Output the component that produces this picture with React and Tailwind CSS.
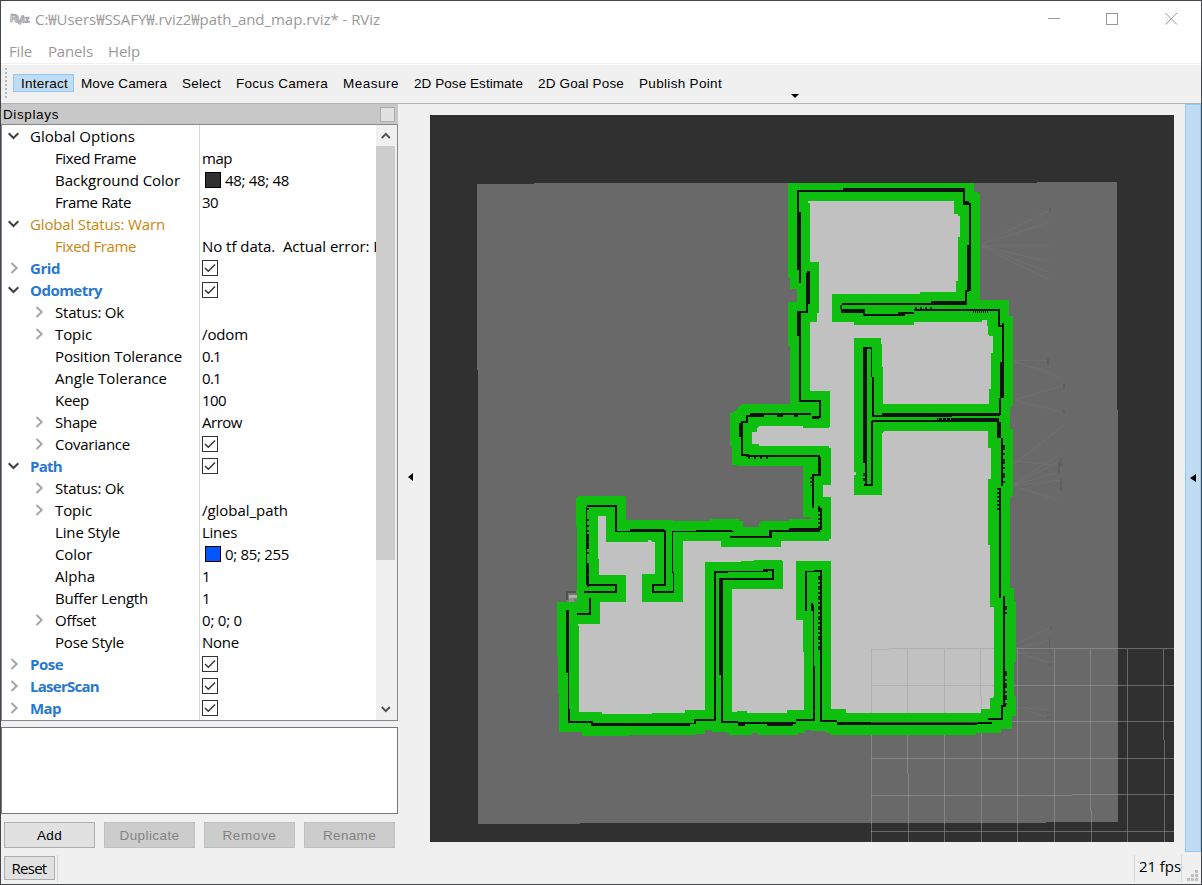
import React, { useLayoutEffect, useRef } from "react";

const UI = "font-['Open_Sans','Noto_Sans_CJK_KR',sans-serif]";
const BITMAP = "font-['Liberation_Sans',sans-serif]";

// A one-line label whose letter spacing is adjusted to fill the width w.
function Fit({ w, className = "", children }) {
  const ref = useRef(null);
  useLayoutEffect(() => {
    const el = ref.current;
    el.style.letterSpacing = "0px";
    const natural = el.getBoundingClientRect().width;
    el.style.letterSpacing = (w - natural) / String(children).length + "px";
  }, [w, children]);
  return (
    <span ref={ref} className={"inline-block shrink-0 whitespace-pre " + className}>
      {children}
    </span>
  );
}

const rows = [
  { l: "Global Options", w: 105, d: 0, a: "open" },
  { l: "Fixed Frame", w: 81, d: 1, v: "map", vw: 30 },
  { l: "Background Color", w: 125, d: 1, v: "48; 48; 48", vw: 64, sw: "bg-[#303030]" },
  { l: "Frame Rate", w: 76, d: 1, v: "30", vw: 16 },
  { l: "Global Status: Warn", w: 135, d: 0, a: "open", c: "text-[#c8860d]" },
  { l: "Fixed Frame", w: 81, d: 1, c: "text-[#c8860d]", v: "No tf data.  Actual error: F", vw: 179 },
  { l: "Grid", w: 30, d: 0, a: "shut", b: true, check: true },
  { l: "Odometry", w: 72, d: 0, a: "open", b: true, check: true },
  { l: "Status: Ok", w: 69, d: 1, a: "shut" },
  { l: "Topic", w: 37, d: 1, a: "shut", v: "/odom", vw: 46 },
  { l: "Position Tolerance", w: 127, d: 1, v: "0.1", vw: 19 },
  { l: "Angle Tolerance", w: 112, d: 1, v: "0.1", vw: 19 },
  { l: "Keep", w: 34, d: 1, v: "100", vw: 24 },
  { l: "Shape", w: 42, d: 1, a: "shut", v: "Arrow", vw: 40 },
  { l: "Covariance", w: 75, d: 1, a: "shut", check: true },
  { l: "Path", w: 32, d: 0, a: "open", b: true, check: true },
  { l: "Status: Ok", w: 69, d: 1, a: "shut" },
  { l: "Topic", w: 37, d: 1, a: "shut", v: "/global_path", vw: 86 },
  { l: "Line Style", w: 65, d: 1, v: "Lines", vw: 35 },
  { l: "Color", w: 37, d: 1, v: "0; 85; 255", vw: 64, sw: "bg-[#0055ff]" },
  { l: "Alpha", w: 40, d: 1, v: "1", vw: 8 },
  { l: "Buffer Length", w: 93, d: 1, v: "1", vw: 8 },
  { l: "Offset", w: 41, d: 1, a: "shut", v: "0; 0; 0", vw: 40 },
  { l: "Pose Style", w: 69, d: 1, v: "None", vw: 37 },
  { l: "Pose", w: 33, d: 0, a: "shut", b: true, check: true },
  { l: "LaserScan", w: 69, d: 0, a: "shut", b: true, check: true },
  { l: "Map", w: 31, d: 0, a: "shut", b: true, check: true },
];

function Arrow({ kind }) {
  if (kind === "open")
    return (
      <svg width="12" height="8" viewBox="0 0 12 8">
        <path d="M0.7 1.2 L5.5 6 L10.3 1.2" fill="none" stroke="#404040" strokeWidth="2" />
      </svg>
    );
  if (kind === "shut")
    return (
      <svg width="12" height="12" viewBox="0 0 12 12">
        <path d="M3.5 1 L8.7 6 L3.5 11" fill="none" stroke="#a3a3a3" strokeWidth="1.9" />
      </svg>
    );
  return null;
}

function Check() {
  return (
    <svg width="16" height="16" viewBox="0 0 16 16" className="shrink-0">
      <rect x="0.5" y="0.5" width="15" height="15" fill="#fff" stroke="#333" />
      <path d="M3 8 L6.3 11.2 L13 4.5" fill="none" stroke="#333" strokeWidth="1.4" />
    </svg>
  );
}

function Row({ r }) {
  const color = r.b ? "text-[#2878cd] font-bold" : r.c || "text-black";
  return (
    <div className="flex h-[22px] shrink-0 text-[15px] leading-[22px]">
      <div className="flex w-[197px] shrink-0 items-center">
        <div className={r.d ? "flex w-[53px] justify-end pr-[10px]" : "flex w-[28px] pl-[6px]"}>
          <Arrow kind={r.a} />
        </div>
        <Fit w={r.w} className={color}>{r.l}</Fit>
      </div>
      <div className="flex w-[177px] items-center overflow-hidden border-l border-[#d8d8d8] pl-[2px]">
        {r.sw && <div className={"mr-1 ml-[3px] size-4 shrink-0 border border-black " + r.sw} />}
        {r.check && <Check />}
        {r.v && <Fit w={r.vw}>{r.v}</Fit>}
      </div>
    </div>
  );
}

const OUTER =
  "M788 183H974V192H978L980 195V300H1009V316H1013V406H1011V409H1010V429H1013V493L1012 497H1010V588H1014V601H1016V662H1014V696H1016V716H1012V729H1001V733H976V735H831V733H826V731H811V730H805V733H798V735H758V733H752V735H729V733H727V732H712V730H705V734H696V735H629V736H582V732H559V694H558V657H557V602H577V527H576V498L578 496H624L626 498V520H673V521H710V519H739V521H743V527H759V523L761 521H789V519H811V517H803V466H737V465H732V446H730V413H732L737 410V408L743 404H790V346H788V302H797V289H790V278H788Z";
const FREE =
  "M808 201H954V214H958V216H960V237H958V281H956V292H920V294H832V322H854V325H914V322H982V320H987V326H988V334L989 336H993V353H991V389H989V404H883V367H882V344H881V338H854V472H856V475H854V495H882V433L884 431H988V448H990L991 449V479H988V545H990V607H994V696L992 698H990V709H981V713H846V709H831V561H796V620H803V652H804V710H787V713H747V711H737V712H732V589H783V561L781 560H754V561H741V562H705V710H685V713H652V714H602V712H579V626H578V624H600V602H626V575H599V559H598V516H606V542H648V540H651L652 542H655V574H642V602H683V541H721V547H781V541H829V539H831V497H823V485H831V448H829V446H759V444H752V432H757V428L759 426H803V428H829L830 426V391H810V322H817V313H819V262H810V203H808Z";

const walls = [
  [797,190,46,2],[843,188,122,4],[963,188,2,17],[963,201,6,4],[969,203,2,42],[967,245,4,46],[965,290,4,2],[965,291,2,14],[931,301,36,4],[842,303,90,2],
  [841,309,24,4],[863,311,2,4],[863,314,42,2],[898,312,16,2],[914,309,84,2],[998,309,2,17],[998,325,5,2],[1002,323,2,39],[1000,362,4,36],[999,398,2,17],
  [797,190,2,22],[797,212,4,58],[799,270,2,13],[806,273,4,31],[807,271,3,3],[806,304,2,8],[798,311,10,2],[797,311,4,25],[799,336,2,65],[799,400,22,2],
  [819,400,2,18],[812,416,7,3],[750,413,61,2],[748,415,16,2],[777,415,6,2],[794,415,4,2],[746,415,2,7],[741,421,7,2],[739,423,4,14],[741,437,2,18],
  [741,454,8,2],[746,455,74,2],[818,457,3,18],[812,474,9,2],[812,474,2,34],[818,506,2,4],[820,508,2,22],[769,530,51,2],[789,528,31,2],[769,530,3,8],
  [730,536,42,2],[672,531,62,1],[696,530,36,2],[672,531,1,42],[673,572,1,20],[652,591,22,2],[652,584,2,8],[652,584,14,2],[664,530,2,55],[615,531,51,1],[630,529,34,2],
  [615,505,2,26],[587,505,30,2],[586,507,1,78],[587,525,2,2],[587,534,2,15],[587,564,2,20],[587,584,30,2],[615,584,2,8],[584,591,33,2],[589,598,2,17],[577,613,14,2],
  [566,610,3,63],[568,673,1,36],[568,709,2,13],[568,721,25,2],[591,723,99,3],[591,723,105,1],[694,719,2,5],[694,719,22,2],[714,571,2,150],[714,571,14,2],
  [728,571,40,1],[763,569,9,2],[772,569,2,11],[719,578,55,2],[719,578,4,97],[721,675,2,46],[721,721,17,2],[738,722,58,2],[738,724,7,2],[767,724,26,2],
  [796,719,19,2],[813,605,1,61],[813,666,2,54],[820,570,2,151],[814,570,8,2],[805,571,2,40],[805,571,10,1],[811,603,2,8],[820,720,17,2],[837,722,140,3],
  [977,722,15,2],[988,718,15,2],[1001,706,2,14],[1001,705,5,2],[1003,596,2,110],[999,488,2,110],[997,422,4,16],[1001,438,2,48],
  [882,413,118,2],[872,415,128,1],[872,415,80,2],[872,420,127,2],[937,418,62,2],[871,421,2,65],[864,484,9,2],[863,347,4,116],[865,463,2,22],[863,347,9,2],[871,347,1,30],[872,377,2,39],
];

// Scattered obstacle cells: [x1, y1, x2, y2, dash pattern]
const cells = [
  [819,576,819,650,"4 2 2 2"],[813,477,813,486,"2 2"],[811,477,811,486,"2 2"],[819,510,819,528,"2 2"],
  [1004,445,1004,486,"5 3 2 4"],[998,488,998,510,"2 2"],[1006,671,1006,706,"5 3 2 2"],[1006,606,1006,614,"4 2"],
  [748,458,768,458,"2 4"],[915,308,932,308,"2 3"],[973,312,988,312,"1 1"],[588,508,588,590,"2 9"],[864,473,864,482,"3 2"],
];

// Dashes carved back out of the solid strokes in the inflation colour.
const gaps = [[938,419,952,419,"1 3"]];

const rays = [
  "M982 244L1050 210M982 244L1050 222M982 245H1050M982 246L1050 262M982 247L1050 280M982 246L1048 272",
  "M1014 361L1046 360M1014 361L1060 378M1014 362L1052 372M1014 400L1062 386M1014 400L1062 412M1014 464L1064 425M1014 461L1060 466",
  "M1014 485L1058 462M1014 485L1060 472M1014 486L1060 480M1014 486L1058 500M1014 484L1058 455",
  "M1016 644L1050 628M1016 648L1050 640M1016 652L1050 654M1016 652L1050 663M1016 707L1048 710M1016 707L1046 717",
];
const specks = [[1049,208,2,4],[1047,358,2,8],[1063,384,2,5],[1063,410,2,3],[1058,462,2,12],[1060,458,2,8],[1060,478,2,12],[1050,626,2,4],[1049,638,1,14],[1049,663,2,2],[1047,711,2,2],[1047,717,2,2]];

function MapView() {
  return (
    <svg width="744" height="727" viewBox="430 115 744 727" shapeRendering="crispEdges" className="block">
      <rect x="430" y="115" width="744" height="727" fill="#303030" />
      <path d="M477 184H534V183H1037V182H1117V410H1118V822H1046V823H580V824H478V370H477Z" fill="#696969" />
      <g stroke="#6e6e6e" strokeWidth="1" fill="none">
        {rays.map((d) => <path key={d} d={d} />)}
      </g>
      {specks.map(([x, y, w, h]) => <rect key={x + "-" + y} x={x} y={y} width={w} height={h} fill="#606060" />)}
      <path d={FREE} fill="#c1c1c1" />
      <g stroke="#a0a0a4" strokeOpacity="0.5" strokeWidth="1" fill="none">
        <path d="M871.5 649V842M907.5 649V773M908.5 773V842M944.5 649V842M980.5 649V697M981.5 697V842M1017.5 649V842M1054.5 649V842M1090.5 649V811M1091.5 811V842M1127.5 649V842M1163.5 649V740M1164.5 740V842" />
        <path d="M871 649.5H889M889 648.5H1174M871 685.5H1174M871 721.5H1174M871 758.5H1174M871 795.5H1072M1072 794.5H1174M871 831.5H1174" />
      </g>
      <path d={OUTER + FREE} fillRule="evenodd" fill="#0fbf0f" />
      <g fill="#101210">
        {walls.map(([x, y, w, h], i) => <rect key={i} x={x} y={y} width={w} height={h} />)}
      </g>
      <path d="M871 722.5H978" stroke="#3c463c" />
      <g stroke="#232823" strokeWidth="2">
        {cells.map(([a, b, c, d, p], i) => <path key={i} d={`M${a} ${b}L${c} ${d}`} strokeDasharray={p} />)}
      </g>
      <g stroke="#0d8f0d" strokeWidth="2">
        {gaps.map(([a, b, c, d, p], i) => <path key={i} d={`M${a} ${b}L${c} ${d}`} strokeDasharray={p} />)}
      </g>
      <rect x="566" y="591" width="11" height="11" fill="#777" />
      <path d="M566 591H576V593H568V600H566Z" fill="#505050" />
      <path d="M569 595H577V598H569Z" fill="#b0b0b0" />
      <path d="M569 598H574V602H569Z" fill="#8f8f8f" />
      <rect x="840" y="305" width="2" height="4" fill="#263026" />
    </svg>
  );
}

const tools = [
  ["Move Camera", 86], ["Select", 39], ["Focus Camera", 92], ["Measure", 56],
  ["2D Pose Estimate", 109], ["2D Goal Pose", 86], ["Publish Point", 83],
];

export default function App() {
  return (
    <div className={"flex h-[885px] w-[1202px] flex-col overflow-hidden border border-[#45474c] bg-[#f0f0f0] text-black " + UI}>
      <header className="flex h-[36px] shrink-0 items-center bg-white pl-[9px]">
        <svg width="20" height="16" viewBox="0 0 20 16" className="shrink-0">
          <g fontFamily="Liberation Sans" fontWeight="bold" fill="#f4f4f4" stroke="#a2a2a2" strokeWidth="0.9">
            <text x="0" y="11" fontSize="11" transform="rotate(4 3 8)">R</text>
            <text x="6" y="12.5" fontSize="11">V</text>
            <text x="12" y="11.5" fontSize="9.5" transform="rotate(-4 15 8)">iz</text>
          </g>
        </svg>
        <Fit w={345} className="ml-[5px] text-[15px] leading-5 text-[#999]">C:₩Users₩SSAFY₩.rviz2₩path_and_map.rviz* - RViz</Fit>
        <svg width="130" height="14" viewBox="0 0 130 14" className="mr-[23px] ml-auto">
          <g fill="none" stroke="#999" strokeWidth="1">
            <path d="M0 6.5H12M58.5 1.5H69.5V12.5H58.5Z" shapeRendering="crispEdges" />
            <path d="M117.5 1L129 12.5M129 1L117.5 12.5" />
          </g>
        </svg>
      </header>
      <nav className="flex h-[26px] shrink-0 items-center bg-white pt-px pl-2 text-[15px] leading-5 text-[#999]">
        <Fit w={23}>File</Fit>
        <Fit w={45} className="ml-4">Panels</Fit>
        <Fit w={32} className="ml-[15px]">Help</Fit>
      </nav>
      <div className="h-[2px] shrink-0 border-b border-white bg-[#f0f0f0]" />
      <div className={"flex h-[39px] shrink-0 border-b border-[#b4b4b4] text-[13.5px] " + BITMAP}>
        <div className="mt-[3px] ml-1 h-8 w-[2px] bg-[repeating-linear-gradient(to_bottom,#b8b8b8_0_2px,transparent_2px_4px)]" />
        <div className="mt-[9px] ml-[6px] flex h-[18px] w-[61px] items-center border border-[#90c8f6] bg-[#c0dcf3] pt-[3px] pl-[7px]">
          <Fit w={47}>Interact</Fit>
        </div>
        <div className="mt-[10px] ml-[7px] flex h-[18px] items-center gap-[15px]">
          {tools.map(([t, w]) => <Fit key={t} w={w}>{t}</Fit>)}
        </div>
        <svg width="8" height="4" viewBox="0 0 8 4" className="mt-[29px] ml-[69px]">
          <path d="M0 0H8L4 4Z" />
        </svg>
      </div>
      <main className="flex h-[749px] shrink-0">
        <section className="flex w-[397px] shrink-0 flex-col">
          <div className={"flex h-5 shrink-0 items-center justify-between bg-[#c8c8c8] pr-[3px] pl-[2px] text-[13.5px] " + BITMAP}>
            <Fit w={56} className="pt-[3px]">Displays</Fit>
            <div className="size-[15px] border border-[#adadad] bg-[#e1e1e1]" />
          </div>
          <div className="flex h-[597px] shrink-0 border border-[#828790] bg-white">
            <div className="flex w-[374px] flex-col">
              {rows.map((r, i) => <Row key={i} r={r} />)}
              <div className="ml-[197px] flex-1 border-l border-[#d8d8d8]" />
            </div>
            <div className="flex w-[21px] flex-col bg-[#f0f0f0] pr-px">
              <div className="flex h-[21px] items-center pl-[5px]">
                <svg width="10" height="7" viewBox="0 0 10 7"><path d="M0.8 6L4.8 1.8L8.8 6" fill="none" stroke="#505050" strokeWidth="1.9" /></svg>
              </div>
              <div className="h-[414px] w-[19px] bg-[#cdcdcd]" />
              <div className="mt-auto flex h-[21px] items-center pl-[5px]">
                <svg width="10" height="7" viewBox="0 0 10 7"><path d="M0.8 1L4.8 5.2L8.8 1" fill="none" stroke="#505050" strokeWidth="1.9" /></svg>
              </div>
            </div>
          </div>
          <div className="mt-[6px] h-[87px] shrink-0 border border-[#7a7a7a] bg-white" />
          <div className={"mt-2 flex gap-[9px] pl-[3px] text-[13.5px] " + BITMAP}>
            {[["Add", 25], ["Duplicate", 60], ["Remove", 54], ["Rename", 53]].map(([t, w]) => (
              <div
                key={t}
                className={
                  "flex h-[26px] w-[91px] items-center justify-center border pt-[3px] " +
                  (t === "Add" ? "border-[#adadad] bg-[#e1e1e1]" : "border-[#bfbfbf] bg-[#cccccc] text-[#838383]")
                }
              >
                <Fit w={w}>{t}</Fit>
              </div>
            ))}
          </div>
        </section>
        <div className="flex w-8 shrink-0 items-center pb-[3px] pl-[10px]">
          <svg width="6" height="8" viewBox="0 0 6 8"><path d="M5 0V8L0 4Z" /></svg>
        </div>
        <div className="mt-[11px] h-[727px] w-[744px] shrink-0"><MapView /></div>
        <div className="ml-[11px] flex h-[748px] w-4 shrink-0 items-center border border-[#90c8f6] bg-[#c0dcf3] pl-1">
          <svg width="6" height="8" viewBox="0 0 6 8"><path d="M6 0V8L0 4Z" /></svg>
        </div>
      </main>
      <footer className="flex h-[31px] shrink-0 items-start text-[15px] leading-5">
        <div className="mt-[3px] ml-[3px] flex h-6 w-[51px] items-center justify-center border border-[#adadad] bg-[#e1e1e1]">
          <Fit w={36} className="pr-px">Reset</Fit>
        </div>
        <div className="mt-[2px] ml-[2px] h-[27px] w-px bg-[#d7d7d7]" />
        <div className="mt-[2px] ml-auto flex h-[27px] w-[48px] items-center border-x border-[#d7d7d7] pb-[5px] pl-1">
          <Fit w={42}>21 fps</Fit>
        </div>
        <svg width="11" height="11" viewBox="0 0 11 11" className="mt-[17px] mr-[3px] ml-[5px]" shapeRendering="crispEdges">
          <path d="M8 0h3v3h-3zM4 4h3v3h-3zM8 4h3v3h-3zM0 8h3v3h-3zM4 8h3v3h-3zM8 8h3v3h-3z" fill="#bfbfbf" />
        </svg>
      </footer>
    </div>
  );
}
